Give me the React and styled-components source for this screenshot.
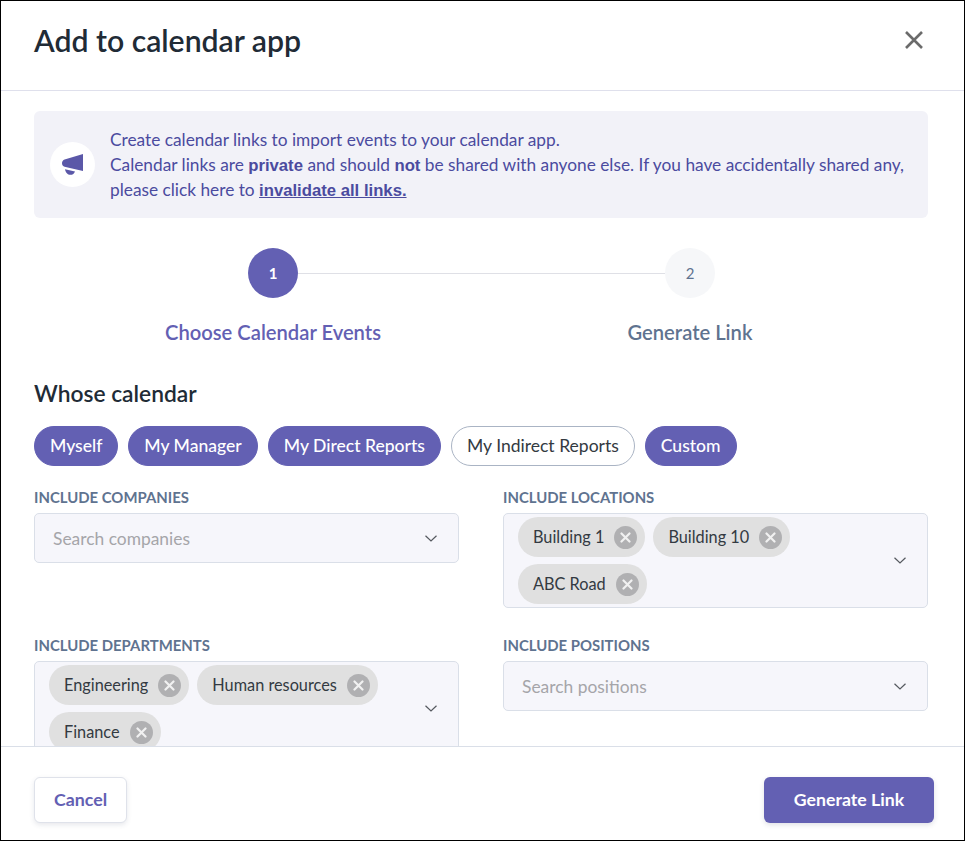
import React from "react";
import styled, { createGlobalStyle } from "styled-components";

const Global = createGlobalStyle`
  html, body { margin: 0; padding: 0; background: #fff; }
  * { box-sizing: border-box; }
  body { font-family: Lato, "Liberation Sans", sans-serif; }
`;

const Frame = styled.div`
  width: 965px;
  height: 841px;
  border: 1px solid #000;
  display: flex;
  flex-direction: column;
  background: #fff;
  overflow: hidden;
`;
const Header = styled.header`
  flex: none;
  height: 90px;
  border-bottom: 1px solid #dfe0ec;
  display: flex;
  align-items: center;
  justify-content: space-between;
  padding: 0 38px 11px 33px;
`;
const Title = styled.h1`
  margin: 0;
  font-size: 30.2px;
  font-weight: 600;
  color: #212b36;
`;
const Close = styled.button`
  border: 0;
  background: none;
  padding: 0;
  width: 24px;
  height: 24px;
  display: flex;
  color: #6b6b6b;
`;
const Body = styled.main`
  flex: 1;
  min-height: 0;
  overflow: hidden;
  padding: 20px 36px 0 33px;
`;
const Banner = styled.div`
  height: 107px;
  background: #f2f2f8;
  border-radius: 6px;
  display: flex;
  align-items: center;
  gap: 15px;
  padding: 0 16px;
`;
const IconCircle = styled.div`
  flex: none;
  width: 45px;
  height: 45px;
  border-radius: 50%;
  background: #fff;
  display: flex;
  align-items: center;
  justify-content: center;
`;
const BannerText = styled.p`
  margin: 0;
  font-size: 17.3px;
  line-height: 25px;
  color: #4b4b9f;
  white-space: nowrap;
  b, a { font-family: "Liberation Sans", sans-serif; font-weight: 700; font-size: 16.7px; line-height: 1; color: #4b4b9f; }
  a { text-decoration: underline; }
`;
const Stepper = styled.div`
  position: relative;
  width: 667px;
  height: 98px;
  margin: 30px 0 0 114px;
  display: grid;
  grid-template-columns: 250px 167px 250px;
`;
const StepLine = styled.div`
  position: absolute;
  top: 25px;
  left: 150px;
  width: 367px;
  height: 1px;
  background: #dfe0e6;
`;
const Step = styled.div`
  position: relative;
  display: flex;
  flex-direction: column;
  align-items: center;
  grid-column: ${p => p.$col};
`;
const StepDot = styled.div`
  width: 50px;
  height: 50px;
  border-radius: 50%;
  display: flex;
  align-items: center;
  justify-content: center;
  font-size: 15px;
  font-weight: ${p => (p.$active ? 700 : 400)};
  background: ${p => (p.$active ? "#6360b3" : "#f6f7f9")};
  color: ${p => (p.$active ? "#fff" : "#5f7390")};
`;
const StepLabel = styled.div`
  margin-top: 21px;
  font-size: 20.2px;
  line-height: 26px;
  font-weight: 600;
  white-space: nowrap;
  color: ${p => (p.$active ? "#6360b3" : "#5f7390")};
`;
const SectionTitle = styled.h2`
  margin: 32px 0 0;
  font-size: 22.8px;
  line-height: 30px;
  font-weight: 600;
  color: #212b36;
`;
const Chips = styled.div`
  display: flex;
  gap: 10px;
  margin-top: 18px;
`;
const Pill = styled.button`
  height: 40px;
  padding: 0 15px 2px;
  border-radius: 20px;
  font-family: inherit;
  font-size: 17.55px;
  white-space: nowrap;
  font-weight: ${p => (p.$on ? 500 : 400)};
  border: 1px solid ${p => (p.$on ? "#6360b3" : "#aab4c4")};
  background: ${p => (p.$on ? "#6360b3" : "#fff")};
  color: ${p => (p.$on ? "#fff" : "#333a42")};
`;
const Fields = styled.div`
  display: grid;
  grid-template-columns: 425px 425px;
  column-gap: 44px;
  row-gap: 27px;
  margin-top: 21px;
`;
const Field = styled.div`
  min-width: 0;
`;
const FieldLabel = styled.label`
  display: block;
  font-size: 14.9px;
  line-height: 20px;
  font-weight: 700;
  text-transform: uppercase;
  color: #5f7390;
  margin-bottom: 6px;
`;
const Select = styled.div`
  min-height: 50px;
  background: #f6f6fb;
  border: 1px solid #dadfe8;
  border-radius: 5px;
  display: flex;
  align-items: center;
  padding: 3px 21px 3px 14px;
`;
const Placeholder = styled.span`
  flex: 1;
  padding-left: 4px;
  font-size: 17.4px;
  color: #a5a5a9;
`;
const Tags = styled.div`
  flex: 1;
  display: flex;
  flex-wrap: wrap;
  gap: 7px 8px;
  padding-right: 30px;
`;
const Tag = styled.span`
  height: 40px;
  border-radius: 20px;
  background: #e0e0e0;
  display: inline-flex;
  align-items: center;
  gap: 10px;
  padding: 0 8px 0 15px;
  font-size: 16.3px;
  line-height: 18px;
  color: #333a42;
  white-space: nowrap;
`;
const TagX = styled.span`
  width: 23px;
  height: 23px;
  border-radius: 50%;
  background: #b0b0b2;
  display: flex;
  align-items: center;
  justify-content: center;
`;
const Footer = styled.footer`
  flex: none;
  height: 94px;
  border-top: 1px solid #dadfe8;
  display: flex;
  align-items: flex-start;
  justify-content: space-between;
  padding: 30px 30px 0 33px;
  background: #fff;
`;
const CancelBtn = styled.button`
  width: 93px;
  height: 46px;
  padding: 0 0 2px;
  border-radius: 6px;
  background: #fff;
  border: 1px solid #dfe2ea;
  box-shadow: 0 2px 5px rgba(60, 66, 100, 0.12);
  color: #6360b3;
  font-family: inherit;
  font-size: 17.8px;
  font-weight: 700;
`;
const PrimaryBtn = styled.button`
  width: 170px;
  height: 46px;
  padding: 0 0 2px;
  border-radius: 6px;
  border: 0;
  background: #6360b3;
  box-shadow: 0 2px 5px rgba(60, 66, 100, 0.16);
  color: #fff;
  font-family: inherit;
  font-size: 17.7px;
  font-weight: 700;
`;

const Chevron = () => (
  <svg width="12" height="7" viewBox="0 0 12 7" fill="none" stroke="#55595f" strokeWidth="1.2">
    <path d="M.5.7L6 6l5.500-5.300" />
  </svg>
);

const TagItem = ({ children }) => (
  <Tag>
    {children}
    <TagX>
      <svg width="11" height="11" viewBox="0 0 11 11" stroke="#f1f1f1" strokeWidth="2.2" strokeLinecap="round">
        <path d="M1.5 1.5l8 8M9.500 1.500l-8 8" />
      </svg>
    </TagX>
  </Tag>
);

const pills = [
  ["Myself", true],
  ["My Manager", true],
  ["My Direct Reports", true],
  ["My Indirect Reports", false],
  ["Custom", true],
];

export default function App() {
  return (
    <Frame>
      <Global />
      <Header>
        <Title>Add to calendar app</Title>
        <Close aria-label="Close">
          <svg width="24" height="24" viewBox="0 0 24 24" fill="none" stroke="currentColor" strokeWidth="2.6">
            <path d="M4 4l16 16M20 4L4 20" />
          </svg>
        </Close>
      </Header>
      <Body>
        <Banner>
          <IconCircle>
            <svg width="21" height="21" viewBox="0 0 21 21" fill="#5b58a8">
              <path d="M21 0v17L9 14.200 2.600 12.800C1 12.400 0 11 0 9.300 0 7.600 1 6.200 2.600 5.600L21 0z" />
              <path d="M3 15.200l10 2.200c-.6 2-2.400 3.400-4.600 3.400C5.600 20.800 3.600 18.400 3 15.200z" />
            </svg>
          </IconCircle>
          <BannerText>
            Create calendar links to import events to your calendar app.
            <br />
            Calendar links are <b>private</b> and should <b>not</b> be shared with anyone else. If you have accidentally shared any,
            <br />
            please click here to <a>invalidate all links.</a>
          </BannerText>
        </Banner>
        <Stepper>
          <StepLine />
          <Step $col="1">
            <StepDot $active>1</StepDot>
            <StepLabel $active>Choose Calendar Events</StepLabel>
          </Step>
          <Step $col="3">
            <StepDot>2</StepDot>
            <StepLabel>Generate Link</StepLabel>
          </Step>
        </Stepper>
        <SectionTitle>Whose calendar</SectionTitle>
        <Chips>
          {pills.map(([t, on]) => (
            <Pill key={t} $on={on}>{t}</Pill>
          ))}
        </Chips>
        <Fields>
          <Field>
            <FieldLabel>Include companies</FieldLabel>
            <Select>
              <Placeholder>Search companies</Placeholder>
              <Chevron />
            </Select>
          </Field>
          <Field>
            <FieldLabel>Include locations</FieldLabel>
            <Select>
              <Tags>
                <TagItem>Building 1</TagItem>
                <TagItem>Building 10</TagItem>
                <TagItem>ABC Road</TagItem>
              </Tags>
              <Chevron />
            </Select>
          </Field>
          <Field>
            <FieldLabel>Include departments</FieldLabel>
            <Select>
              <Tags>
                <TagItem>Engineering</TagItem>
                <TagItem>Human resources</TagItem>
                <TagItem>Finance</TagItem>
              </Tags>
              <Chevron />
            </Select>
          </Field>
          <Field>
            <FieldLabel>Include positions</FieldLabel>
            <Select>
              <Placeholder>Search positions</Placeholder>
              <Chevron />
            </Select>
          </Field>
        </Fields>
      </Body>
      <Footer>
        <CancelBtn>Cancel</CancelBtn>
        <PrimaryBtn>Generate Link</PrimaryBtn>
      </Footer>
    </Frame>
  );
}
